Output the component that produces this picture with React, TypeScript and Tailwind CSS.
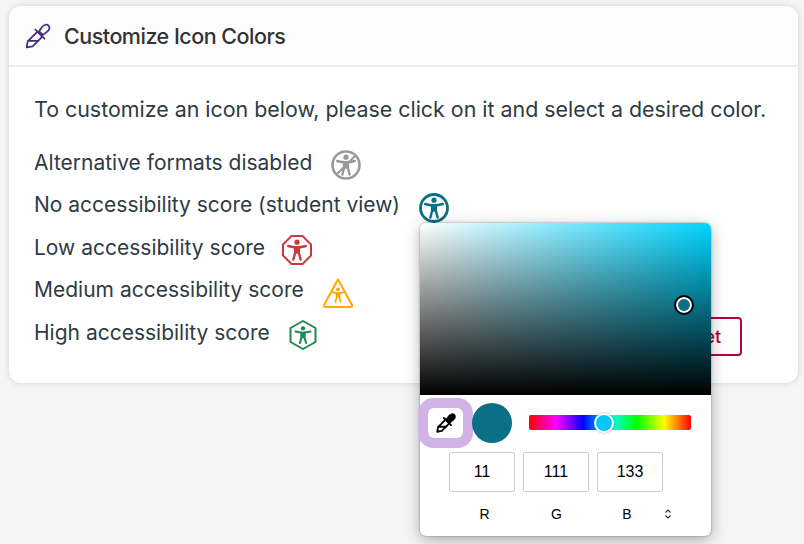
const Figure = ({ c, s = 1 }: { c: string; s?: number }) => (
  <g transform={`translate(16 16) scale(${s}) translate(-16 -16)`}>
    <circle cx="16" cy="8.2" r="2.6" fill={c} />
    <path d="M7.2 12 Q16 14.6 24.8 12" fill="none" stroke={c} strokeWidth="2.4" strokeLinecap="round" />
    <path d="M14 13.5 L14.2 18.5 L12.4 25.5 M18 13.5 L17.8 18.5 L19.6 25.5" fill="none" stroke={c} strokeWidth="2.4" strokeLinecap="round" strokeLinejoin="round" />
    <path d="M14 13 H18 V18.5 L16 20 L14 18.5 Z" fill={c} />
  </g>
);

const Dropper = ({ c, w, size }: { c: string; w: number; size: number }) => (
  <svg width={size} height={size} viewBox="0 0 24 24" fill="none" stroke={c} strokeWidth={w} strokeLinejoin="round" strokeLinecap="round">
    <path d="M1.5 22.5 L2.5 17 L11.5 8 L16 12.5 L7 21.5 Z" />
    <path d="M3 16.5 H12" />
    <path d="M9.5 6 L18 14.5" />
    <path d="M13 7.5 L16 3.5 C17.8 1.3 20.3 1 21.8 2.4 C23.2 4 22.8 6.2 20.5 8 L16.5 11 Z" fill={c === "#000" ? "#000" : "none"} />
  </svg>
);

const Row = ({ label, gap, children }: { label: string; gap: string; children: React.ReactNode }) => (
  <div className={`flex items-center h-[42.5px] ${gap}`}>
    <span className="text-[21px] text-[#2d3b45] whitespace-nowrap">{label}</span>
    <span className="translate-y-[3px] flex">{children}</span>
  </div>
);

const Box = ({ v }: { v: string }) => (
  <div className="w-[66px] h-[40px] border border-[#cccccc] rounded-[2px] flex items-center justify-center text-[16px] text-black [font-family:'Liberation_Sans',Arial,sans-serif]">{v}</div>
);

export default function App() {
  return (
    <div className="relative w-[804px] h-[544px] overflow-hidden bg-[#f5f5f5] [font-family:Inter,'Liberation_Sans',sans-serif]">
      <div className="pt-[6px] pl-[9px]">
        <div className="w-[789px] h-[377px] bg-white rounded-[12px] shadow-[0_0_6px_rgba(0,0,0,0.15)] overflow-hidden">
          <div className="h-[61px] bg-[#fcfcfc] border-b-2 border-[#eeeeee] flex items-center pl-[16px] gap-[13px]">
            <Dropper c="#4b2a7f" w={1.6} size={26} />
            <span className="text-[21.5px] font-medium text-[#333333] tracking-[-0.5px] translate-y-[1px]">Customize Icon Colors</span>
          </div>
          <div className="pl-[25px] pt-[26px]">
            <p className="text-[21.4px] leading-[32px] text-[#2d3b45] whitespace-nowrap">To customize an icon below, please click on it and select a desired color.</p>
            <div className="mt-[16px]">
              <Row label="Alternative formats disabled" gap="gap-[18px]">
                <svg width="32" height="32" viewBox="0 0 32 32">
                  <circle cx="16" cy="16" r="13.5" fill="none" stroke="#999999" strokeWidth="2.6" />
                  <Figure c="#999999" />
                  <path d="M7 25 L25 7" stroke="#999999" strokeWidth="2" />
                </svg>
              </Row>
              <Row label="No accessibility score (student view)" gap="gap-[18px]">
                <svg width="32" height="32" viewBox="0 0 32 32">
                  <circle cx="16" cy="16" r="13.5" fill="none" stroke="#0b6f85" strokeWidth="2.8" />
                  <Figure c="#0b6f85" />
                </svg>
              </Row>
              <Row label="Low accessibility score" gap="gap-[16px]">
                <svg width="32" height="32" viewBox="0 0 32 32">
                  <path d="M10.5 2 H21.5 L30 10.5 V21.5 L21.5 30 H10.5 L2 21.5 V10.5 Z" fill="none" stroke="#c93b3b" strokeWidth="2" strokeLinejoin="round" />
                  <Figure c="#c93b3b" />
                </svg>
              </Row>
              <Row label="Medium accessibility score" gap="gap-[18px]">
                <svg width="32" height="32" viewBox="0 0 32 32">
                  <path d="M16 2.5 L30 28 Q30.5 30 28.5 30 H3.5 Q1.5 30 2 28 Z" fill="none" stroke="#ffa800" strokeWidth="2" strokeLinejoin="round" />
                  <g transform="translate(0 2)"><Figure c="#ffa800" s={0.72} /></g>
                </svg>
              </Row>
              <div className="flex items-center justify-between h-[42.5px]">
                <div className="flex items-center gap-[18px]">
                  <span className="text-[21px] text-[#2d3b45] whitespace-nowrap">High accessibility score</span>
                  <svg width="30" height="32" viewBox="0 0 30 32" className="translate-y-[3px]">
                    <path d="M15 2 L27.5 9 V23 L15 30 L2.5 23 V9 Z" fill="none" stroke="#1d8a54" strokeWidth="2" strokeLinejoin="round" />
                    <g transform="translate(-1 0)"><Figure c="#1d8a54" s={0.85} /></g>
                  </svg>
                </div>
                <button className="w-[90px] h-[39px] mr-[56px] translate-y-[4px] border-2 border-[#b8003c] rounded-[4px] text-[#b8003c] text-[18px] font-medium text-center">Reset</button>
              </div>
            </div>
          </div>
        </div>
      </div>

      <div className="absolute left-[420px] top-[223px] w-[291px] h-[313px] bg-white rounded-[6px] shadow-[0_0_2px_rgba(0,0,0,0.45),0_4px_16px_rgba(0,0,0,0.3)]">
        <div className="relative h-[172px] rounded-t-[6px] overflow-hidden bg-[linear-gradient(to_right,#ffffff,#00d4ff)]">
          <div className="absolute inset-0 bg-[linear-gradient(to_bottom,rgba(0,0,0,0),#000000)]" />
          <div className="absolute left-[254px] top-[72px] w-[20px] h-[20px] rounded-full border-[2.5px] border-black bg-[#0b6f85] shadow-[inset_0_0_0_2px_#ffffff]" />
        </div>
        <div className="flex items-center h-[57px] pl-[8px] pb-[2px]">
          <div className="w-[35px] h-[30px] bg-white rounded-[6px] shadow-[0_0_0_10px_#d1b3e5] flex items-center justify-center">
            <Dropper c="#000" w={2.2} size={20} />
          </div>
          <div className="w-[40px] h-[40px] rounded-full bg-[#0b6f85] ml-[9px]" />
          <div className="relative w-[162px] h-[15px] ml-[17px] rounded-[2px] bg-[linear-gradient(to_right,#ff0000,#ff00ff,#0000ff,#00ffff,#00ff00,#ffff00,#ff0000)]">
            <div className="absolute left-[65px] top-[-2.5px] w-[20px] h-[20px] rounded-full bg-[#00c8ff] border-2 border-white shadow-[0_0_2px_rgba(0,0,0,0.4)]" />
          </div>
        </div>
        <div className="flex gap-[8px] pl-[29px]">
          <Box v="11" />
          <Box v="111" />
          <Box v="133" />
        </div>
        <div className="relative h-[44px] flex items-center text-[14px] text-black [font-family:'Liberation_Sans',Arial,sans-serif]">
          <span className="w-[59px] ml-[35px] text-center">R</span>
          <span className="w-[85px] text-center">G</span>
          <span className="w-[56px] text-center">B</span>
          <svg width="10" height="12" viewBox="0 0 10 12" className="ml-[8px]" fill="none" stroke="#333" strokeWidth="1.2">
            <path d="M2.5 4.5 L5 2 L7.5 4.5 M2.5 7.5 L5 10 L7.5 7.5" />
          </svg>
        </div>
      </div>
    </div>
  );
}
